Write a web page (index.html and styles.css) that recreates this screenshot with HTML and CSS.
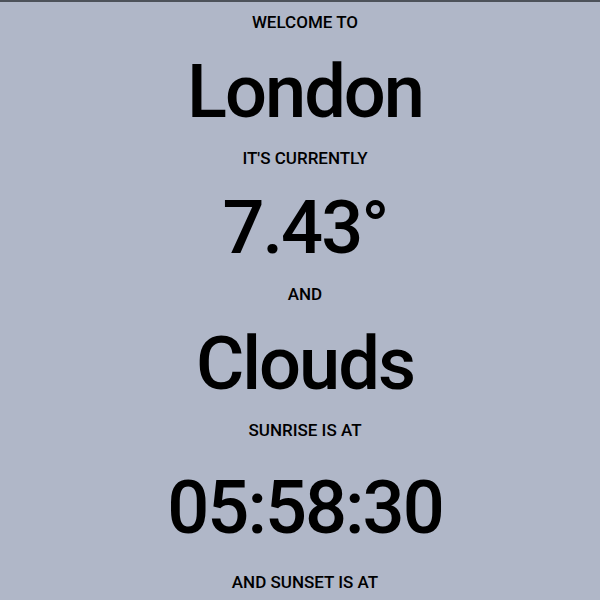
FILE: index.html
```html
<!DOCTYPE html>
<html lang="en">
<head>
<meta charset="utf-8">
<title>Weather</title>
<link rel="stylesheet" href="styles.css">
</head>
<body>
<main class="weather">
  <p class="label label-first">WELCOME TO</p>
  <h1 class="value">London</h1>
  <p class="label">IT'S CURRENTLY</p>
  <h1 class="value">7.43°</h1>
  <p class="label">AND</p>
  <h1 class="value">Clouds</h1>
  <p class="label">SUNRISE IS AT</p>
  <h1 class="value value-time">05:58:30</h1>
  <p class="label label-last">AND SUNSET IS AT</p>
</main>
</body>
</html>
```
FILE: styles.css
```css
html, body {
  margin: 0;
  padding: 0;
  height: 100%;
  overflow: hidden;
}
body {
  background: #b0b7c8;
  border-top: 2px solid #4d525a;
  font-family: Roboto, "Liberation Sans", sans-serif;
  color: #000;
}
.weather {
  display: flex;
  flex-direction: column;
  align-items: center;
  padding: 10px 0 0 10px;
}
.label {
  margin: 16px 0 0;
  font-size: 17px;
  line-height: 20px;
  font-weight: 500;
  letter-spacing: 0;
}
.label-first {
  margin-top: 0;
}
.label-last {
  margin-top: 24px;
}
.value {
  margin: 20px 0 0;
  font-size: 74px;
  line-height: 80px;
  font-weight: 500;
  letter-spacing: -2px;
}
.value-time {
  margin-top: 28px;
}
```
